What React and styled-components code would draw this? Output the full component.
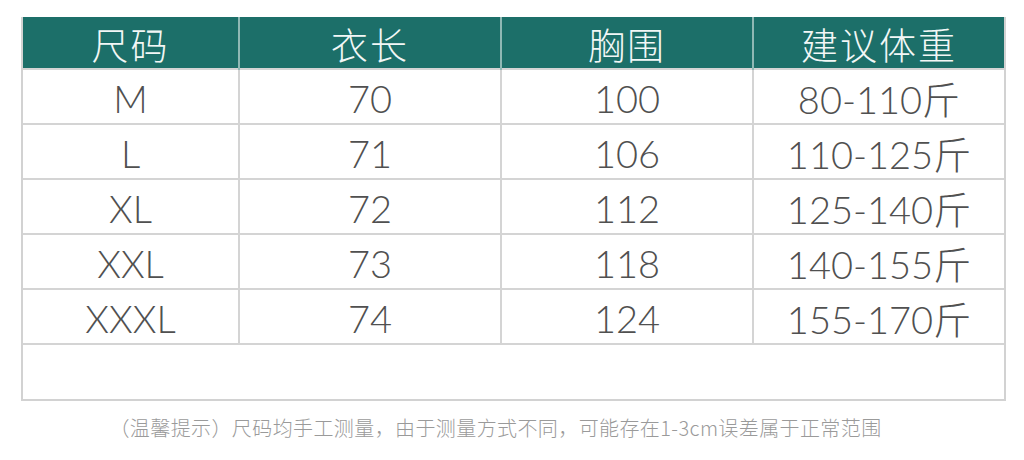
import React from 'react';
import styled, { createGlobalStyle } from 'styled-components';

const GlobalStyle = createGlobalStyle`
  html, body {
    margin: 0;
    padding: 0;
    background: #fff;
  }
  body {
    font-family: Lato, "Noto Sans CJK SC", sans-serif;
  }
`;

const columns = ['尺码', '衣长', '胸围', '建议体重'];

const rows = [
  ['M', '70', '100', '80-110斤'],
  ['L', '71', '106', '110-125斤'],
  ['XL', '72', '112', '125-140斤'],
  ['XXL', '73', '118', '140-155斤'],
  ['XXXL', '74', '124', '155-170斤'],
];

const Page = styled.div`
  width: 1024px;
  height: 460px;
  padding: 17px 0 0 21px;
  box-sizing: border-box;
  overflow: hidden;
`;

const Table = styled.div`
  width: 985px;
  border: 2px solid #d2d2d2;
  border-top: none;
  box-sizing: border-box;
`;

const Row = styled.div`
  display: grid;
  grid-template-columns: 215px 262px 252px 1fr;
  height: ${(p) => p.$h || 55}px;
  background: ${(p) => (p.$head ? '#1c6f69' : '#fff')};
  border-bottom: ${(p) => (p.$last ? 'none' : '2px solid #d4d4d4')};
  box-sizing: border-box;
`;

const HeadCell = styled.div`
  display: flex;
  align-items: center;
  justify-content: center;
  color: #f2f7f6;
  font-family: "Noto Sans CJK SC", sans-serif;
  font-weight: 200;
  font-size: 37px;
  letter-spacing: 2px;
  border-left: ${(p) => (p.$first ? 'none' : '2px solid #8fb8b4')};
`;

const Cell = styled.div`
  display: flex;
  align-items: center;
  justify-content: center;
  color: #505050;
  font-family: Lato, "Noto Sans CJK SC", sans-serif;
  font-weight: 300;
  font-size: 38px;
  border-left: ${(p) => (p.$first ? 'none' : '2px solid #d4d4d4')};
`;

const Note = styled.div`
  width: 985px;
  padding-right: 36px;
  box-sizing: border-box;
  margin-top: 12px;
  text-align: center;
  color: #9a9a9a;
  font-family: "Noto Sans CJK SC", sans-serif;
  font-weight: 300;
  font-size: 20px;
  letter-spacing: 0.4px;
`;

export default function App() {
  return (
    <Page>
      <GlobalStyle />
      <Table>
        <Row $head $h={53}>
          {columns.map((c, i) => (
            <HeadCell key={c} $first={i === 0}>{c}</HeadCell>
          ))}
        </Row>
        {rows.map((r) => (
          <Row key={r[0]}>
            {r.map((v, i) => (
              <Cell key={i} $first={i === 0}>{v}</Cell>
            ))}
          </Row>
        ))}
        <Row $last $h={54} />
      </Table>
      <Note>（温馨提示）尺码均手工测量，由于测量方式不同，可能存在1-3cm误差属于正常范围</Note>
    </Page>
  );
}
